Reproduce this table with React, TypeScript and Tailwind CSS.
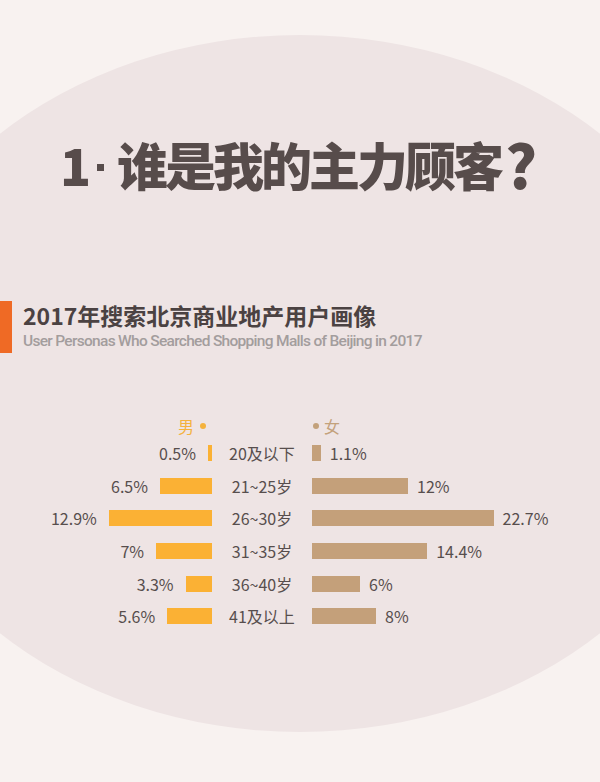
import React from "react";

type Row = { age: string; m: number; f: number; ml: string; fl: string };

const rows: Row[] = [
  { age: "20及以下", m: 0.5, f: 1.1, ml: "0.5%", fl: "1.1%" },
  { age: "21~25岁", m: 6.5, f: 12, ml: "6.5%", fl: "12%" },
  { age: "26~30岁", m: 12.9, f: 22.7, ml: "12.9%", fl: "22.7%" },
  { age: "31~35岁", m: 7, f: 14.4, ml: "7%", fl: "14.4%" },
  { age: "36~40岁", m: 3.3, f: 6, ml: "3.3%", fl: "6%" },
  { age: "41及以上", m: 5.6, f: 8, ml: "5.6%", fl: "8%" },
];

const SCALE = 8;

export default function App() {
  return (
    <div className="relative w-[600px] h-[782px] overflow-hidden bg-[#f8f2f0] font-['Noto_Sans_CJK_SC','Noto_Sans',sans-serif]">
      <div className="absolute left-[-130px] top-[35px] w-[860px] h-[697px] rounded-[50%] bg-[#eee4e4]" />
      <div className="relative flex flex-col">
        <h1 className="mt-[134px] ml-[60px] flex items-center text-[51px] leading-[60px] font-black text-[#574c4b] whitespace-nowrap">
          <span className="tracking-[-1px]">1</span>
          <span className="ml-[7px] mr-[13px] mt-[6px] w-[7px] h-[7px] bg-[#574c4b]" />
          <span className="tracking-[-3px]">谁是我的主力顾客</span>
          <span className="ml-[4px] text-[60px] leading-[60px] mt-[-2px]">?</span>
        </h1>

        <div className="mt-[107px] flex items-stretch">
          <div className="w-[12px] bg-[#ef6a25]" />
          <div className="ml-[11px] flex flex-col pb-[2px]">
            <div className="text-[23px] leading-[28px] font-bold text-[#4b4242] whitespace-nowrap">2017年搜索北京商业地产用户画像</div>
            <div className="mt-[2px] text-[15.5px] leading-[20px] font-medium text-[#a39d9d] whitespace-nowrap font-['Roboto',sans-serif] tracking-[-0.7px]">
              User Personas Who Searched Shopping Malls of Beijing in 2017
            </div>
          </div>
        </div>

        <div className="mt-[62px] flex flex-col">
          <div className="flex items-center h-[22px] text-[16px]">
            <div className="w-[212px] flex justify-end items-center pr-[6px] text-[#f4b23d]">
              <span>男</span>
              <span className="ml-[6px] w-[6px] h-[6px] rounded-full bg-[#f4b23d]" />
            </div>
            <div className="w-[100px]" />
            <div className="flex items-center text-[#c3a17b]">
              <span className="ml-[1px] w-[6px] h-[6px] rounded-full bg-[#c3a17b]" />
              <span className="ml-[5px]">女</span>
            </div>
          </div>
          {rows.map((r) => (
            <div key={r.age} className="flex items-center h-[32.6px] text-[16px] text-[#574e4d]">
              <div className="w-[212px] flex justify-end items-center">
                <span className="mr-[12px]">{r.ml}</span>
                <div className="h-[16px] bg-[#fbb134]" style={{ width: `${r.m * SCALE}px` }} />
              </div>
              <div className="w-[100px] text-center whitespace-nowrap">{r.age}</div>
              <div className="flex items-center">
                <div className="h-[16px] bg-[#c4a07a]" style={{ width: `${r.f * SCALE}px` }} />
                <span className="ml-[9px]">{r.fl}</span>
              </div>
            </div>
          ))}
        </div>
      </div>
    </div>
  );
}
